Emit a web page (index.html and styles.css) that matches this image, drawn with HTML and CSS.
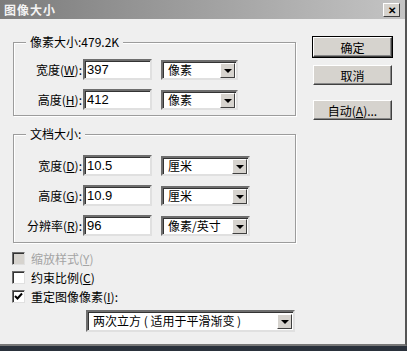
FILE: index.html
```html
<!DOCTYPE html>
<html lang="zh-CN">
<head>
  <meta charset="UTF-8">
  <title>图像大小</title>
  <link rel="stylesheet" href="styles.css">
</head>
<body>
  <div class="window">
    <div class="titlebar">
      <span class="title">图像大小</span>
      <span class="close">✕</span>
    </div>

    <div class="content">
      <div class="left">
        <div class="group">
          <span class="legend">像素大小:479.2K</span>
          <div class="row">
            <label class="lbl">宽度(<u>W</u>):</label>
            <input type="text" class="field" value="397">
            <div class="select narrow"><span>像素</span><i class="arrow"></i></div>
          </div>
          <div class="row">
            <label class="lbl">高度(<u>H</u>):</label>
            <input type="text" class="field" value="412">
            <div class="select narrow"><span>像素</span><i class="arrow"></i></div>
          </div>
        </div>

        <div class="group group-doc">
          <span class="legend">文档大小:</span>
          <div class="row">
            <label class="lbl">宽度(<u>D</u>):</label>
            <input type="text" class="field" value="10.5">
            <div class="select"><span>厘米</span><i class="arrow"></i></div>
          </div>
          <div class="row">
            <label class="lbl">高度(<u>G</u>):</label>
            <input type="text" class="field" value="10.9">
            <div class="select"><span>厘米</span><i class="arrow"></i></div>
          </div>
          <div class="row">
            <label class="lbl">分辨率(<u>R</u>):</label>
            <input type="text" class="field" value="96">
            <div class="select"><span>像素/英寸</span><i class="arrow"></i></div>
          </div>
        </div>

        <div class="check first disabled"><span class="box"></span><span>缩放样式(<u>Y</u>)</span></div>
        <div class="check"><span class="box"></span><span>约束比例(<u>C</u>)</span></div>
        <div class="check"><span class="box"><svg width="9" height="9" viewBox="0 0 9 9"><path d="M1 4 L3.5 6.5 L8 1.5" fill="none" stroke="#000" stroke-width="2"/></svg></span><span>重定图像像素(<u>I</u>):</span></div>

        <div class="select wide"><span>两次立方 ( 适用于平滑渐变 )</span><i class="arrow"></i></div>
      </div>

      <div class="buttons">
        <button class="btn default">确定</button>
        <button class="btn">取消</button>
        <button class="btn auto">自动(<u>A</u>)...</button>
      </div>
    </div>
  </div>
</body>
</html>
```

FILE: styles.css
```css
body {
  margin: 0;
  width: 407px;
  height: 351px;
  background: #2a313b;
  font-family: "Noto Sans CJK SC", "Liberation Sans", sans-serif;
  font-size: 12px;
  line-height: 16px;
  color: #000;
  overflow: hidden;
}
.window {
  width: 405px;
  height: 344px;
  background: #efefef;
  border-right: 2px solid #555;
  border-bottom: 2px solid #777;
}
.titlebar {
  height: 19px;
  display: flex;
  align-items: center;
  justify-content: space-between;
  padding: 0 4px 0 4px;
  background: linear-gradient(to right, #7c7c7c, #c4c4c4);
}
.title {
  color: #f4f4f4;
  font-weight: bold;
  font-size: 12px;
  letter-spacing: 1px;
}
.close {
  width: 15px;
  height: 12px;
  line-height: 12px;
  text-align: center;
  font-size: 10px;
  font-weight: bold;
  background: #d6d3ce;
  border: 1px solid;
  border-color: #fff #404040 #404040 #fff;
  margin-right: 1px;
}
.content {
  display: flex;
  padding: 18px 0 0 12px;
}
.left {
  width: 284px;
}
.group {
  margin: 5px 0 0 1px;
  border: 1px solid #9c9c9c;
  box-shadow: inset 1px 1px 0 #fff, 1px 1px 0 #fff;
  padding: 0 0 5px 0;
  line-height: 14px;
}
.group-doc {
  margin-top: 18px;
  padding-bottom: 6px;
}
.legend {
  display: block;
  width: max-content;
  margin: -8px 0 0 12px;
  padding: 0 4px;
  height: 14px;
  line-height: 14px;
  background: #efefef;
}
.row {
  display: flex;
  align-items: flex-end;
  height: 21px;
  margin-top: 9px;
}
.group .legend + .row {
  margin-top: 10px;
}
.group-doc .legend + .row {
  margin-top: 14px;
}
.lbl {
  width: 68px;
  text-align: right;
  padding-right: 1px;
  align-self: center;
}
.field {
  box-sizing: border-box;
  width: 69px;
  height: 21px;
  margin: 0;
  padding: 0 2px;
  font-family: "Liberation Sans", sans-serif;
  font-size: 13px;
  background: #fff;
  border: 2px solid;
  border-color: #6e6e6e #e0e0e0 #e0e0e0 #6e6e6e;
  box-shadow: inset 1px 1px 0 #333;
  outline: none;
}
.select {
  box-sizing: border-box;
  display: flex;
  align-items: center;
  justify-content: space-between;
  width: 89px;
  height: 20px;
  margin-left: 9px;
  padding: 0 1px 0 5px;
  background: #fff;
  border: 2px solid;
  border-color: #6e6e6e #e0e0e0 #e0e0e0 #6e6e6e;
  box-shadow: inset 1px 1px 0 #333;
}
.select.narrow {
  width: 77px;
}
.select.wide {
  width: 209px;
  height: 22px;
  margin: 4px 0 0 74px;
}
.arrow {
  box-sizing: border-box;
  width: 15px;
  height: 15px;
  background: #d6d3ce;
  border: 1px solid;
  border-color: #fff #404040 #404040 #fff;
  position: relative;
}
.arrow::after {
  content: "";
  position: absolute;
  left: 3px;
  top: 5px;
  border-left: 4px solid transparent;
  border-right: 4px solid transparent;
  border-top: 4px solid #000;
}
.check {
  display: flex;
  align-items: center;
  height: 19px;
  gap: 6px;
}
.check.first {
  margin-top: 6px;
}
.box {
  box-sizing: border-box;
  width: 13px;
  height: 13px;
  background: #fff;
  border: 1px solid;
  border-color: #6e6e6e #e0e0e0 #e0e0e0 #6e6e6e;
  box-shadow: inset 1px 1px 0 #333;
  display: flex;
  align-items: center;
  justify-content: center;
}
.check.disabled {
  color: #a4a4a4;
}
.check.disabled .box {
  background: #d6d3ce;
}
.buttons {
  display: flex;
  flex-direction: column;
  margin-left: 17px;
}
.btn {
  width: 79px;
  height: 20px;
  padding: 0;
  margin-bottom: 8px;
  font-family: "Noto Sans CJK SC", "Liberation Sans", sans-serif;
  font-size: 12px;
  background: #d6d3ce;
  border: 1px solid;
  border-color: #fff #404040 #404040 #fff;
  box-shadow: inset -1px -1px 0 #888;
}
.btn.default {
  outline: 1px solid #000;
}
.btn.auto {
  margin-top: 7px;
}
```
